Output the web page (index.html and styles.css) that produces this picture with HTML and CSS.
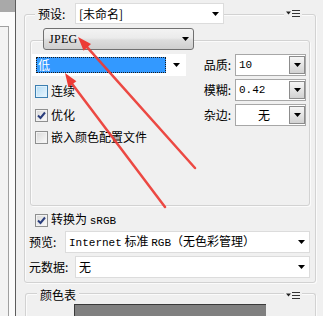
FILE: index.html
```html
<!DOCTYPE html>
<html>
<head>
<meta charset="utf-8">
<link rel="stylesheet" href="styles.css">
</head>
<body>
<div class="strip">
  <div class="strip-head"></div>
  <div class="strip-box"></div>
</div>
<div class="main">
  <div class="group outer">
    <div class="ghead">
      <span class="glabel preset-label">预设:</span>
      <div class="combo preset"><span class="val">[未命名]</span><svg class="arr" width="7" height="4" viewBox="0 0 7 4"><path d="M0 0h7L3.5 4z"/></svg></div>
      <span class="fill"></span>
      <span class="flyout"><svg width="14" height="7" viewBox="0 0 14 7"><path d="M0 1.5h5L2.5 4.5z" fill="#222"/><rect x="6" y="0" width="8" height="1" fill="#333"/><rect x="6" y="3" width="8" height="1" fill="#333"/><rect x="6" y="6" width="8" height="1" fill="#333"/></svg></span>
    </div>
    <div class="group inner">
      <div class="ghead ihead">
        <div class="format"><span class="serif">JPEG</span><svg class="arr" width="7" height="4" viewBox="0 0 7 4"><path d="M0 0h7L3.5 4z"/></svg></div>
      </div>
      <div class="cols">
        <div class="lcol">
          <div class="quality"><span class="hl">低</span><svg class="arr" width="7" height="4" viewBox="0 0 7 4"><path d="M0 0h7L3.5 4z"/></svg></div>
          <div class="chk c1"><span class="box hov"></span><span>连续</span></div>
          <div class="chk c2"><span class="box"><svg width="11" height="11" viewBox="0 0 11 11"><path d="M2 5.5l2.5 2.5L9 2.5" fill="none" stroke="#2a3d7c" stroke-width="2"/></svg></span><span>优化</span></div>
          <div class="chk c3"><span class="box"></span><span>嵌入颜色配置文件</span></div>
        </div>
        <div class="rcol">
          <span class="lab">品质:</span>
          <div class="spin"><span class="sv m">10</span><span class="sbtn"><svg width="7" height="4" viewBox="0 0 7 4"><path d="M0 0h7L3.5 4z"/></svg></span></div>
          <span class="lab">模糊:</span>
          <div class="spin"><span class="sv m">0.42</span><span class="sbtn"><svg width="7" height="4" viewBox="0 0 7 4"><path d="M0 0h7L3.5 4z"/></svg></span></div>
          <span class="lab">杂边:</span>
          <div class="spin matte"><span class="sv">无</span><span class="sbtn"><svg width="7" height="4" viewBox="0 0 7 4"><path d="M0 0h7L3.5 4z"/></svg></span></div>
        </div>
      </div>
    </div>
    <div class="chk srgb"><span class="box"><svg width="11" height="11" viewBox="0 0 11 11"><path d="M2 5.5l2.5 2.5L9 2.5" fill="none" stroke="#2a3d7c" stroke-width="2"/></svg></span><span>转换为 <span class="m">sRGB</span></span></div>
    <div class="field f1"><span class="flab w36">预览:</span><div class="combo wide"><span class="val"><span class="m">Internet</span> 标准 <span class="m">RGB</span>（无色彩管理）</span><svg class="arr" width="7" height="4" viewBox="0 0 7 4"><path d="M0 0h7L3.5 4z"/></svg></div></div>
    <div class="field f2"><span class="flab w46">元数据:</span><div class="combo wide"><span class="val">无</span><svg class="arr" width="7" height="4" viewBox="0 0 7 4"><path d="M0 0h7L3.5 4z"/></svg></div></div>
  </div>
  <div class="group ctab">
    <div class="ghead chead">
      <span class="glabel ctab-label">颜色表</span>
      <span class="fill"></span>
      <span class="flyout"><svg width="14" height="7" viewBox="0 0 14 7"><path d="M0 1.5h5L2.5 4.5z" fill="#222"/><rect x="6" y="0" width="8" height="1" fill="#333"/><rect x="6" y="3" width="8" height="1" fill="#333"/><rect x="6" y="6" width="8" height="1" fill="#333"/></svg></span>
    </div>
    <div class="swatch"></div>
  </div>
</div>
<svg class="arrows" width="323" height="316" viewBox="0 0 323 316">
  <g fill="#ec3b35" stroke="none">
    <path d="M76.4 81.2L65 73L68.4 87.2z"/>
    <path d="M91 44.1L78 37L83.6 50.7z"/>
  </g>
  <g stroke="#ec3b35" stroke-width="2.5" stroke-linecap="round" fill="none" opacity="0.92">
    <line x1="165" y1="207" x2="72.4" y2="84.2"/>
    <line x1="195" y1="168" x2="87.3" y2="47.4"/>
  </g>
</svg>
</body>
</html>
```

FILE: styles.css
```css
* { box-sizing: border-box; }
html, body { margin: 0; height: 316px; overflow: hidden; }
body {
  width: 323px;
  background: #f0f0f0;
  display: flex;
  position: relative;
  font: 12px/1 "Noto Sans CJK SC", sans-serif;
  color: #000;
}
.m { font-family: "Liberation Mono", monospace; font-size: 11px; }
.serif { font-family: "Liberation Serif", serif; font-size: 12px; letter-spacing: 0.3px; }

.strip {
  width: 16px;
  flex: none;
  border-right: 1px solid #5c5c5c;
  background: #fbfbfb;
  display: flex;
  flex-direction: column;
}
.strip-head { height: 12px; background: #a9a9a9; }
.strip-box {
  margin-top: 14px;
  width: 9px;
  flex: 1;
  border-top: 1px solid #a0a0a0;
  border-right: 1px solid #a0a0a0;
  background: #f3f3f3;
}

.main { flex: 1; padding: 14px 7px 0 8px; }

.group {
  border: 1px solid #d2d2d2;
  border-radius: 3px;
  box-shadow: inset 1px 1px 0 #fbfbfb, 1px 1px 0 #fbfbfb;
}
.outer { padding-bottom: 4px; }

.ghead { display: flex; align-items: center; height: 21px; margin-top: -12px; }
.glabel { background: #f0f0f0; padding: 0 3px; height: 100%; display: flex; align-items: center; }
.preset-label { margin-left: 10px; width: 40px; }
.fill { flex: 1; }
.flyout {
  background: #f0f0f0;
  padding: 0 2px;
  height: 10px;
  display: flex;
  align-items: center;
  margin-right: 13px;
}

.arr { flex: none; display: block; }
.combo {
  background: #fff;
  border: 1px solid #dcdcdc;
  display: flex;
  align-items: center;
  padding-left: 3px;
}
.combo .arr { margin-left: auto; margin-right: 4px; }
.preset { width: 149px; height: 21px; }
.val { white-space: pre; }

.inner { margin: 16px 5px 0 5px; height: 166px; }
.ihead { margin-top: -13px; height: 22px; }
.format {
  margin-left: 12px;
  width: 151px;
  height: 22px;
  border: 1px solid #707070;
  border-radius: 3px;
  background: linear-gradient(#f3f3f3, #ebebeb 45%, #dddddd 55%, #cfcfcf);
  display: flex;
  align-items: center;
  padding-left: 5px;
}
.format .arr { margin-left: auto; margin-right: 4px; }

.cols { display: flex; margin-top: 4px; }
.lcol { width: 155px; margin-left: 1px; flex: none; }
.quality {
  width: 154px;
  height: 22px;
  background: #fff;
  display: flex;
  align-items: center;
  padding: 3px 0 3px 4px;
}
.hl {
  width: 130px;
  height: 16px;
  background: #3399ff;
  color: #fff;
  outline: 1px dotted #1a1a1a;
  outline-offset: -1px;
  padding-left: 2px;
  display: flex;
  align-items: center;
}
.quality .arr { margin-left: 7px; }

.chk { display: flex; align-items: center; height: 22px; margin-left: 3px; white-space: pre; }
.c1 { margin-top: 4px; }
.c2 { margin-top: 2px; }
.box {
  width: 13px;
  height: 13px;
  flex: none;
  margin-right: 3px;
  border: 1px solid #8e8f8f;
  background: linear-gradient(135deg, #d8d8d8, #fbfbfb);
  box-shadow: inset 0 0 0 1px #f2f2f2;
  display: flex;
  align-items: center;
  justify-content: center;
}
.box.hov {
  border-color: #3c7fb1;
  background: linear-gradient(135deg, #b2dbf5, #eaf6fd);
  box-shadow: inset 0 0 0 1px #def1fc;
}

.rcol {
  flex: 1;
  display: grid;
  grid-template-columns: 1fr 71px;
  column-gap: 4px;
  row-gap: 3px;
  align-items: center;
  align-content: start;
  padding-right: 3px;
}
.lab { justify-self: end; }
.spin {
  height: 22px;
  border: 1px solid #a7a7a7;
  background: #fff;
  display: flex;
  align-items: center;
  padding: 1px 0 1px 1px;
}
.sv { flex: 1; padding-left: 2px; }
.matte .sv { text-align: center; }
.sbtn {
  width: 16px;
  height: 18px;
  border: 1px solid #8c8c8c;
  background: linear-gradient(#f6f6f6, #d2d2d2);
  display: flex;
  align-items: center;
  justify-content: center;
}

.srgb { margin: 5px 0 0 10px; height: 18px; }
.field { display: flex; align-items: center; height: 22px; margin-left: 4px; }
.f1 { margin-top: 2px; }
.f2 { margin-top: 3px; }
.flab { flex: none; }
.w36 { width: 36px; }
.w46 { width: 46px; }
.wide { flex: 1; height: 22px; margin-right: 5px; }

.ctab { margin: 10px 0 0 1px; height: 23px; border-bottom: none; border-radius: 3px 3px 0 0; }
.chead { margin-top: -6px; height: 14px; }
.ctab-label { margin-left: 11px; }
.swatch {
  margin: 2px 0 0 48px;
  width: 192px;
  height: 12px;
  background: #808080;
  border-top: 1px solid #3a3a3a;
  border-left: 1px solid #3a3a3a;
}

.arrows { position: absolute; left: 0; top: 0; pointer-events: none; }
```
